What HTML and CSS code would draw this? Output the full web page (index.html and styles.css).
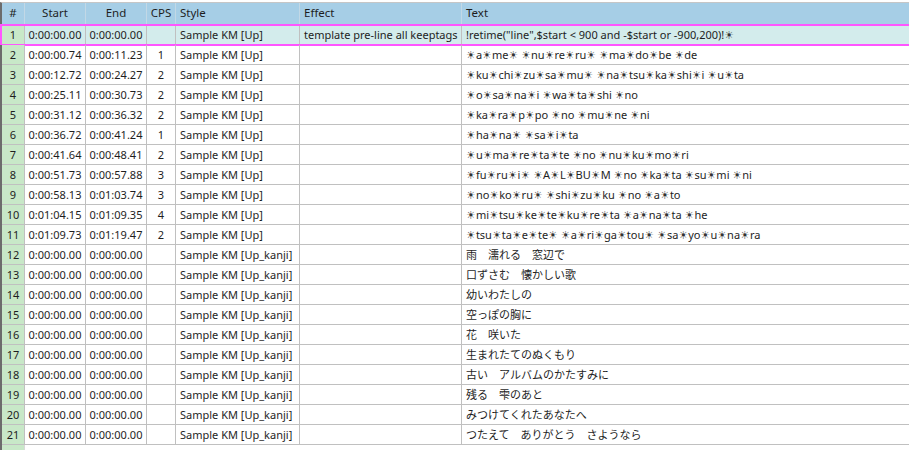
FILE: index.html
```html
<!DOCTYPE html>
<html>
<head>
<meta charset="utf-8">
<link rel="stylesheet" href="styles.css">
</head>
<body>
<div class="grid">
  <div class="row head">
    <div class="c n">#</div><div class="c ctr">Start</div><div class="c ctr">End</div><div class="c ctr">CPS</div><div class="c">Style</div><div class="c">Effect</div><div class="c">Text</div>
  </div>
  <div class="row active">
    <div class="c n">1</div><div class="c ctr">0:00:00.00</div><div class="c ctr">0:00:00.00</div><div class="c ctr"></div><div class="c">Sample KM [Up]</div><div class="c">template pre-line all keeptags</div><div class="c">!retime("line",$start &lt; 900 and -$start or -900,200)!<span class="s">☀</span></div>
  </div>
  <div class="row">
    <div class="c n">2</div><div class="c ctr">0:00:00.74</div><div class="c ctr">0:00:11.23</div><div class="c ctr">1</div><div class="c">Sample KM [Up]</div><div class="c"></div><div class="c"><span class="s">☀</span>a<span class="s">☀</span>me<span class="s">☀</span> <span class="s">☀</span>nu<span class="s">☀</span>re<span class="s">☀</span>ru<span class="s">☀</span> <span class="s">☀</span>ma<span class="s">☀</span>do<span class="s">☀</span>be <span class="s">☀</span>de</div>
  </div>
  <div class="row">
    <div class="c n">3</div><div class="c ctr">0:00:12.72</div><div class="c ctr">0:00:24.27</div><div class="c ctr">2</div><div class="c">Sample KM [Up]</div><div class="c"></div><div class="c"><span class="s">☀</span>ku<span class="s">☀</span>chi<span class="s">☀</span>zu<span class="s">☀</span>sa<span class="s">☀</span>mu<span class="s">☀</span> <span class="s">☀</span>na<span class="s">☀</span>tsu<span class="s">☀</span>ka<span class="s">☀</span>shi<span class="s">☀</span>i <span class="s">☀</span>u<span class="s">☀</span>ta</div>
  </div>
  <div class="row">
    <div class="c n">4</div><div class="c ctr">0:00:25.11</div><div class="c ctr">0:00:30.73</div><div class="c ctr">2</div><div class="c">Sample KM [Up]</div><div class="c"></div><div class="c"><span class="s">☀</span>o<span class="s">☀</span>sa<span class="s">☀</span>na<span class="s">☀</span>i <span class="s">☀</span>wa<span class="s">☀</span>ta<span class="s">☀</span>shi <span class="s">☀</span>no</div>
  </div>
  <div class="row">
    <div class="c n">5</div><div class="c ctr">0:00:31.12</div><div class="c ctr">0:00:36.32</div><div class="c ctr">2</div><div class="c">Sample KM [Up]</div><div class="c"></div><div class="c"><span class="s">☀</span>ka<span class="s">☀</span>ra<span class="s">☀</span>p<span class="s">☀</span>po <span class="s">☀</span>no <span class="s">☀</span>mu<span class="s">☀</span>ne <span class="s">☀</span>ni</div>
  </div>
  <div class="row">
    <div class="c n">6</div><div class="c ctr">0:00:36.72</div><div class="c ctr">0:00:41.24</div><div class="c ctr">1</div><div class="c">Sample KM [Up]</div><div class="c"></div><div class="c"><span class="s">☀</span>ha<span class="s">☀</span>na<span class="s">☀</span> <span class="s">☀</span>sa<span class="s">☀</span>i<span class="s">☀</span>ta</div>
  </div>
  <div class="row">
    <div class="c n">7</div><div class="c ctr">0:00:41.64</div><div class="c ctr">0:00:48.41</div><div class="c ctr">2</div><div class="c">Sample KM [Up]</div><div class="c"></div><div class="c"><span class="s">☀</span>u<span class="s">☀</span>ma<span class="s">☀</span>re<span class="s">☀</span>ta<span class="s">☀</span>te <span class="s">☀</span>no <span class="s">☀</span>nu<span class="s">☀</span>ku<span class="s">☀</span>mo<span class="s">☀</span>ri</div>
  </div>
  <div class="row">
    <div class="c n">8</div><div class="c ctr">0:00:51.73</div><div class="c ctr">0:00:57.88</div><div class="c ctr">3</div><div class="c">Sample KM [Up]</div><div class="c"></div><div class="c"><span class="s">☀</span>fu<span class="s">☀</span>ru<span class="s">☀</span>i<span class="s">☀</span> <span class="s">☀</span>A<span class="s">☀</span>L<span class="s">☀</span>BU<span class="s">☀</span>M <span class="s">☀</span>no <span class="s">☀</span>ka<span class="s">☀</span>ta <span class="s">☀</span>su<span class="s">☀</span>mi <span class="s">☀</span>ni</div>
  </div>
  <div class="row">
    <div class="c n">9</div><div class="c ctr">0:00:58.13</div><div class="c ctr">0:01:03.74</div><div class="c ctr">3</div><div class="c">Sample KM [Up]</div><div class="c"></div><div class="c"><span class="s">☀</span>no<span class="s">☀</span>ko<span class="s">☀</span>ru<span class="s">☀</span> <span class="s">☀</span>shi<span class="s">☀</span>zu<span class="s">☀</span>ku <span class="s">☀</span>no <span class="s">☀</span>a<span class="s">☀</span>to</div>
  </div>
  <div class="row">
    <div class="c n">10</div><div class="c ctr">0:01:04.15</div><div class="c ctr">0:01:09.35</div><div class="c ctr">4</div><div class="c">Sample KM [Up]</div><div class="c"></div><div class="c"><span class="s">☀</span>mi<span class="s">☀</span>tsu<span class="s">☀</span>ke<span class="s">☀</span>te<span class="s">☀</span>ku<span class="s">☀</span>re<span class="s">☀</span>ta <span class="s">☀</span>a<span class="s">☀</span>na<span class="s">☀</span>ta <span class="s">☀</span>he</div>
  </div>
  <div class="row">
    <div class="c n">11</div><div class="c ctr">0:01:09.73</div><div class="c ctr">0:01:19.47</div><div class="c ctr">2</div><div class="c">Sample KM [Up]</div><div class="c"></div><div class="c"><span class="s">☀</span>tsu<span class="s">☀</span>ta<span class="s">☀</span>e<span class="s">☀</span>te<span class="s">☀</span> <span class="s">☀</span>a<span class="s">☀</span>ri<span class="s">☀</span>ga<span class="s">☀</span>tou<span class="s">☀</span> <span class="s">☀</span>sa<span class="s">☀</span>yo<span class="s">☀</span>u<span class="s">☀</span>na<span class="s">☀</span>ra</div>
  </div>
  <div class="row">
    <div class="c n">12</div><div class="c ctr">0:00:00.00</div><div class="c ctr">0:00:00.00</div><div class="c ctr"></div><div class="c">Sample KM [Up_kanji]</div><div class="c"></div><div class="c jp">雨　濡れる　窓辺で</div>
  </div>
  <div class="row">
    <div class="c n">13</div><div class="c ctr">0:00:00.00</div><div class="c ctr">0:00:00.00</div><div class="c ctr"></div><div class="c">Sample KM [Up_kanji]</div><div class="c"></div><div class="c jp">口ずさむ　懐かしい歌</div>
  </div>
  <div class="row">
    <div class="c n">14</div><div class="c ctr">0:00:00.00</div><div class="c ctr">0:00:00.00</div><div class="c ctr"></div><div class="c">Sample KM [Up_kanji]</div><div class="c"></div><div class="c jp">幼いわたしの</div>
  </div>
  <div class="row">
    <div class="c n">15</div><div class="c ctr">0:00:00.00</div><div class="c ctr">0:00:00.00</div><div class="c ctr"></div><div class="c">Sample KM [Up_kanji]</div><div class="c"></div><div class="c jp">空っぽの胸に</div>
  </div>
  <div class="row">
    <div class="c n">16</div><div class="c ctr">0:00:00.00</div><div class="c ctr">0:00:00.00</div><div class="c ctr"></div><div class="c">Sample KM [Up_kanji]</div><div class="c"></div><div class="c jp">花　咲いた</div>
  </div>
  <div class="row">
    <div class="c n">17</div><div class="c ctr">0:00:00.00</div><div class="c ctr">0:00:00.00</div><div class="c ctr"></div><div class="c">Sample KM [Up_kanji]</div><div class="c"></div><div class="c jp">生まれたてのぬくもり</div>
  </div>
  <div class="row">
    <div class="c n">18</div><div class="c ctr">0:00:00.00</div><div class="c ctr">0:00:00.00</div><div class="c ctr"></div><div class="c">Sample KM [Up_kanji]</div><div class="c"></div><div class="c jp">古い　アルバムのかたすみに</div>
  </div>
  <div class="row">
    <div class="c n">19</div><div class="c ctr">0:00:00.00</div><div class="c ctr">0:00:00.00</div><div class="c ctr"></div><div class="c">Sample KM [Up_kanji]</div><div class="c"></div><div class="c jp">残る　雫のあと</div>
  </div>
  <div class="row">
    <div class="c n">20</div><div class="c ctr">0:00:00.00</div><div class="c ctr">0:00:00.00</div><div class="c ctr"></div><div class="c">Sample KM [Up_kanji]</div><div class="c"></div><div class="c jp">みつけてくれたあなたへ</div>
  </div>
  <div class="row">
    <div class="c n">21</div><div class="c ctr">0:00:00.00</div><div class="c ctr">0:00:00.00</div><div class="c ctr"></div><div class="c">Sample KM [Up_kanji]</div><div class="c"></div><div class="c jp">つたえて　ありがとう　さようなら</div>
  </div>
  <div class="filler"><div class="fn"></div></div>
</div>
</body>
</html>
```

FILE: styles.css
```css
html, body {
  margin: 0;
  padding: 0;
  background: #ffffff;
}
body {
  width: 909px;
  height: 450px;
  overflow: hidden;
  font-family: "Noto Sans", "Open Sans", sans-serif;
  font-size: 11px;
  color: #1e1e1e;
}
.grid {
  padding-top: 2px;
  display: flex;
  flex-direction: column;
}
.row {
  display: grid;
  grid-template-columns: 23px 61px 61px 29px 124px 162px 1fr;
  border-left: 2px solid #6c6c6c;
  height: 20px;
  position: relative;
}
.c {
  box-sizing: border-box;
  height: 20px;
  line-height: 19px;
  padding: 0 4px;
  border-right: 1px solid #c0c0c0;
  border-bottom: 1px solid #c0c0c0;
  white-space: nowrap;
  overflow: hidden;
}
.c:last-child {
  border-right: none;
}
.ctr {
  text-align: center;
  padding: 0 2px;
}
.n {
  background: #c8e8c8;
  text-align: center;
  padding: 0 1px;
}
.head {
  border-top: 1px solid #c6c6c6;
  height: 22px;
  background: #a6cee6;
}
.head .c {
  height: 22px;
  line-height: 20px;
  background: #a6cee6;
  border-right-color: #c2d8e6;
  border-bottom-color: #a6cee6;
  font-size: 11.5px;
}
.active .c {
  background: #d3ecec;
}
.active .n {
  background: #c8e8c8;
}
.active::after {
  content: "";
  position: absolute;
  left: -2px;
  right: -4px;
  top: -1px;
  bottom: -1px;
  border: 2px solid #ff55ff;
  pointer-events: none;
}
.s {
  font-family: "DejaVu Sans", sans-serif;
  font-size: 11px;
  line-height: 1;
  color: #333;
}
.jp {
  font-family: "Noto Sans CJK JP", sans-serif;
  font-size: 11px;
}
.filler {
  display: flex;
  border-left: 2px solid #6c6c6c;
  height: 10px;
}
.fn {
  width: 22px;
  background: #c8e8c8;
  border-right: 1px solid #d8d8d8;
}
```
